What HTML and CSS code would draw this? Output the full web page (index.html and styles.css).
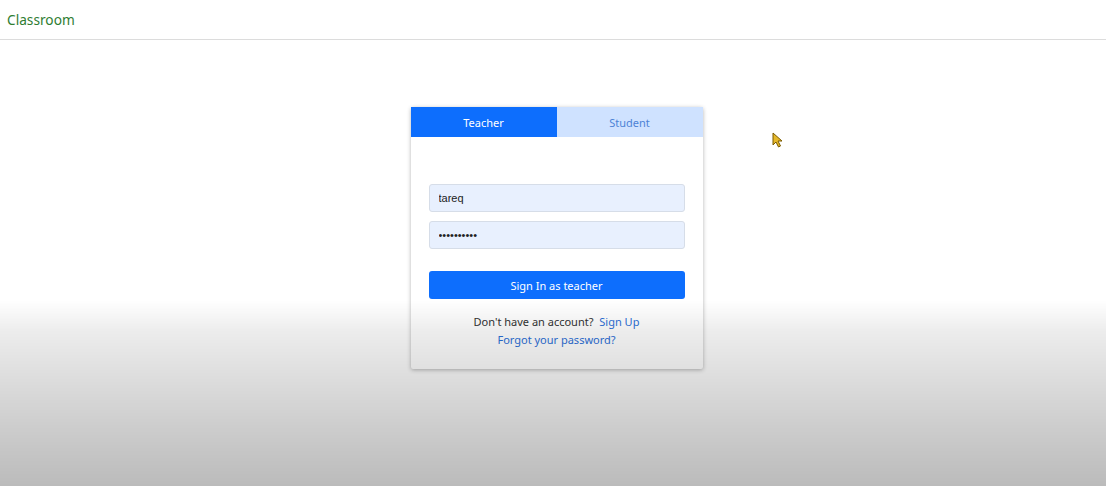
FILE: index.html
```html
<!DOCTYPE html>
<html lang="en">
<head>
<meta charset="utf-8">
<title>Classroom</title>
<link rel="stylesheet" href="styles.css">
</head>
<body>
<header class="navbar">
  <a class="brand" href="#">Classroom</a>
</header>
<main class="page">
  <section class="card">
    <div class="tabs">
      <button class="tab tab-active">Teacher</button>
      <button class="tab">Student</button>
    </div>
    <form class="card-body">
      <input class="field" type="text" value="tareq">
      <input class="field" type="password" value="tareqtareq">
      <button class="submit" type="button">Sign In as teacher</button>
      <p class="links">Don't have an account? <a href="#">Sign Up</a><br><a href="#">Forgot your password?</a></p>
    </form>
  </section>
</main>
<div class="shade"></div>
<svg class="cursor" width="12" height="16" viewBox="0 0 12 16"><path d="M1 1 L1 13 L4 10 L6.5 15 L8.5 14 L6 9 L10 9 Z" fill="#e5b82a" stroke="#7a5a00" stroke-width="1"/></svg>
</body>
</html>
```
FILE: styles.css
```css
* { box-sizing: border-box; }
html, body { margin: 0; height: 100%; }
body {
  font-family: "Noto Sans", "Open Sans", sans-serif;
  background: #fff;
  color: #212529;
  overflow: hidden;
}
.navbar {
  height: 40px;
  border-bottom: 1px solid #dcdcdc;
  display: flex;
  align-items: center;
  padding: 0 7px;
}
.brand {
  color: #2f7d32;
  font-size: 13.7px;
  text-decoration: none;
}
.page {
  display: flex;
  justify-content: center;
  padding-top: 67px;
}
.card {
  width: 292px;
  background: #fff;
  box-shadow: 0 1px 4px rgba(0,0,0,0.3);
  border-radius: 2px;
  margin-left: 7px;
}
.tabs {
  display: flex;
  height: 30px;
}
.tab {
  flex: 1;
  border: 0;
  font-family: inherit;
  font-size: 11px;
  background: #cfe2ff;
  color: #4d83d6;
  padding: 0;
}
.tab-active {
  background: #0d6efd;
  color: #fff;
}
.card-body {
  padding: 47px 18px 20px;
  display: flex;
  flex-direction: column;
}
.field {
  height: 28px;
  background: #e8f0fe;
  border: 1px solid #d6dde8;
  border-radius: 3px;
  padding: 0 9px;
  font-family: "Liberation Sans", Arial, sans-serif;
  font-size: 11px;
  color: #222;
  margin-bottom: 9px;
}
.submit {
  margin-top: 13px;
  height: 28px;
  background: #0d6efd;
  border: 0;
  border-radius: 3px;
  color: #fff;
  font-family: inherit;
  font-size: 11px;
}
.links {
  margin: 14px 0 0;
  text-align: center;
  font-size: 11px;
  line-height: 18px;
  color: #333;
}
.links a {
  color: #2d6fd8;
  text-decoration: none;
}
.links a:first-child { margin-left: 3px; }
.shade {
  position: fixed;
  inset: 0;
  pointer-events: none;
  background: linear-gradient(to bottom,
    rgba(0,0,0,0) 0px,
    rgba(0,0,0,0) 300px,
    rgba(0,0,0,0.07) 330px,
    rgba(0,0,0,0.137) 380px,
    rgba(0,0,0,0.2) 430px,
    rgba(0,0,0,0.267) 486px);
}
.cursor {
  position: fixed;
  left: 772px;
  top: 132px;
}
```
